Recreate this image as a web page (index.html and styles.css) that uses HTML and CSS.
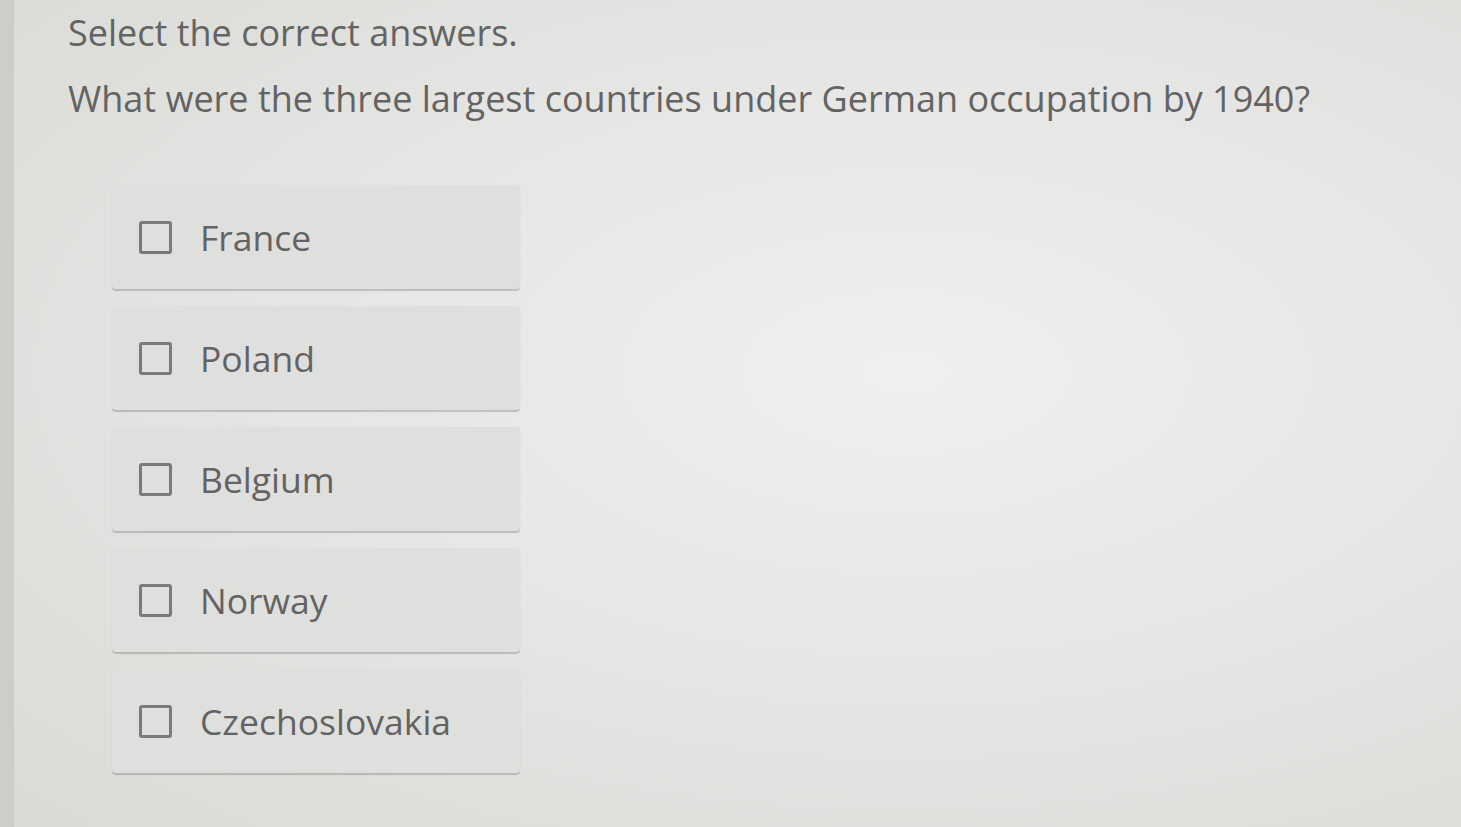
FILE: index.html
```html
<!DOCTYPE html>
<html lang="en">
<head>
    <meta charset="UTF-8">
    <meta name="viewport" content="width=device-width, initial-scale=1.0">
    <title>Select the correct answers</title>
    <link rel="stylesheet" href="styles.css">
</head>
<body>
    <div class="page">
        <div class="question">
            <p class="instructions">Select the correct answers.</p>
            <p class="prompt">What were the three largest countries under German occupation by 1940?</p>

            <!-- Answer choices -->
            <ul class="choices">
                <li class="choice"><span class="box"></span><span class="label">France</span></li>
                <li class="choice"><span class="box"></span><span class="label">Poland</span></li>
                <li class="choice"><span class="box"></span><span class="label">Belgium</span></li>
                <li class="choice"><span class="box"></span><span class="label">Norway</span></li>
                <li class="choice"><span class="box"></span><span class="label">Czechoslovakia</span></li>
            </ul>
        </div>
    </div>
</body>
</html>
```

FILE: styles.css
```css
html, body {
    margin: 0;
    padding: 0;
    height: 100%;
}
body {
    font-family: "Open Sans", "Liberation Sans", sans-serif;
    color: #636363;
    background: radial-gradient(ellipse at 62% 45%, #efefee 0%, #e6e6e4 45%, #d9d9d5 100%);
    overflow: hidden;
}
.page {
    height: 100%;
    border-left: 14px solid #cdcdc9;
    box-sizing: border-box;
}
.question {
    padding: 9px 0 0 54px;
}
.instructions {
    margin: 0;
    font-size: 36px;
    line-height: 48px;
}
.prompt {
    margin: 18px 0 0;
    font-size: 36px;
    line-height: 48px;
}
.choices {
    list-style: none;
    margin: 62px 0 0 44px;
    padding: 0;
    width: 408px;
}
.choice {
    display: flex;
    align-items: center;
    height: 104px;
    margin-bottom: 17px;
    padding-left: 27px;
    background-color: #dfdfdd;
    border-radius: 4px;
    box-shadow: 0 2px 1px rgba(0,0,0,0.18);
}
.box {
    width: 27px;
    height: 27px;
    border: 3px solid #7a7a78;
    border-radius: 3px;
    margin-right: 28px;
}
.label {
    font-size: 35.5px;
    line-height: 46px;
}
```
